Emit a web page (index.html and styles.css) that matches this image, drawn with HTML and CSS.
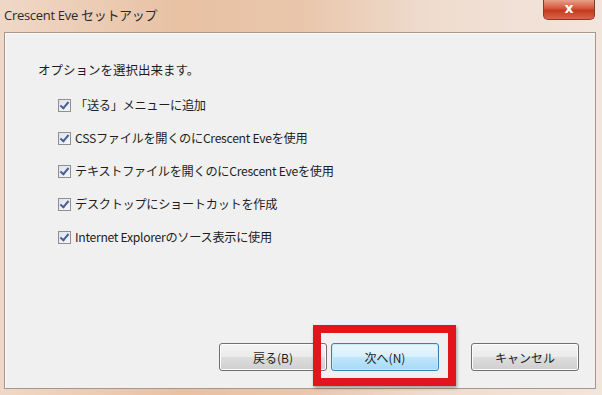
FILE: index.html
```html
<!DOCTYPE html>
<html lang="ja">
<head>
    <meta charset="UTF-8">
    <title>Crescent Eve セットアップ</title>
    <link rel="stylesheet" href="styles.css">
</head>
<body>
    <div class="window">
        <div class="titlebar">
            <div class="title">Crescent Eve セットアップ</div>
            <div class="close-btn">x</div>
        </div>

        <div class="panel">
            <p class="intro">オプションを選択出来ます。</p>

            <div class="options">
                <label class="option"><span class="check"></span>「送る」メニューに追加</label>
                <label class="option"><span class="check"></span>CSSファイルを開くのにCrescent Eveを使用</label>
                <label class="option"><span class="check"></span>テキストファイルを開くのにCrescent Eveを使用</label>
                <label class="option"><span class="check"></span>デスクトップにショートカットを作成</label>
                <label class="option"><span class="check"></span>Internet Explorerのソース表示に使用</label>
            </div>

            <div class="buttons">
                <button class="btn">戻る(B)</button>
                <span class="highlight">
                    <button class="btn btn-default">次へ(N)</button>
                </span>
                <button class="btn btn-cancel">キャンセル</button>
            </div>
        </div>
    </div>
</body>
</html>
```

FILE: styles.css
```css
body {
    margin: 0;
    background: #eee0d6;
    font-family: "Noto Sans CJK JP", "Noto Sans", sans-serif;
}

.window {
    width: 602px;
    height: 395px;
    display: flex;
    flex-direction: column;
    background: linear-gradient(90deg, #efd8c7 0%, #e8c1a3 30%, #e9c6ab 50%, #efdccf 72%, #f2e5dc 100%);
}

.titlebar {
    height: 32px;
    display: flex;
    justify-content: space-between;
    align-items: flex-start;
}

.title {
    font-family: "Open Sans", "Noto Sans CJK JP", sans-serif;
    font-size: 13px;
    color: #2a2a2a;
    padding: 5px 0 0 4px;
    letter-spacing: -0.3px;
}

.close-btn {
    width: 52px;
    height: 20px;
    margin-right: 7px;
    border: 1px solid #8a3a2a;
    border-top: none;
    border-radius: 0 0 5px 5px;
    background: linear-gradient(180deg, #e8a08a 0%, #d2553a 45%, #c43a1f 55%, #d8664a 100%);
    color: #fff;
    font-family: "DejaVu Sans", sans-serif;
    font-weight: bold;
    font-size: 14px;
    line-height: 17px;
    text-align: center;
    box-sizing: border-box;
}

.panel {
    height: 357px;
    margin: 0 6px 0 4px;
    border: 1px solid #a8968a;
    box-shadow: inset 1px 1px 0 #fbfbfb;
    background: #f0f0f0;
    box-sizing: border-box;
    display: flex;
    flex-direction: column;
    padding: 0 16px 17px 33px;
}

.intro {
    margin: 28px 0 0;
    font-size: 12.5px;
    line-height: 18px;
    color: #1e1e1e;
}

.options {
    display: flex;
    flex-direction: column;
    gap: 15px;
    margin: 17px 0 0 20px;
}

.option {
    display: flex;
    align-items: center;
    gap: 4px;
    height: 18px;
    font-size: 12.2px;
    color: #1e1e1e;
    letter-spacing: -0.3px;
}

.check {
    width: 11px;
    height: 11px;
    border: 1px solid #8f8f8f;
    background: linear-gradient(135deg, #dfe3ea, #f6f7f9);
    position: relative;
}

.check::after {
    content: "";
    position: absolute;
    left: 3px;
    top: 0px;
    width: 3px;
    height: 7px;
    border: solid #4a5f97;
    border-width: 0 2px 2px 0;
    transform: rotate(40deg);
}

.buttons {
    margin-top: auto;
    display: flex;
    justify-content: flex-end;
    align-items: center;
    gap: 4px;
}

.btn {
    width: 108px;
    height: 28px;
    border: 1px solid #707070;
    border-radius: 3px;
    background: linear-gradient(180deg, #f4f4f4 0%, #ebebeb 48%, #dddddd 52%, #cfcfcf 100%);
    box-shadow: inset 0 0 0 1px #fcfcfc;
    font-family: "Noto Sans CJK JP", sans-serif;
    font-size: 12px;
    color: #1e1e1e;
    padding: 0;
}

.btn-default {
    border-color: #3c7fb1;
    background: linear-gradient(180deg, #eaf6fd 0%, #d9f0fc 48%, #bee6fd 52%, #a7d9f5 100%);
    box-shadow: inset 0 0 0 1px #c6ecfb;
}

.btn-cancel {
    margin-left: 28px;
}

.highlight {
    position: relative;
    display: flex;
}

.highlight::after {
    content: "";
    position: absolute;
    left: -18px;
    right: -17px;
    top: -18px;
    bottom: -15px;
    border: 8px solid #e3151c;
    box-shadow: 1px 2px 3px rgba(0, 0, 0, 0.35);
}
```
